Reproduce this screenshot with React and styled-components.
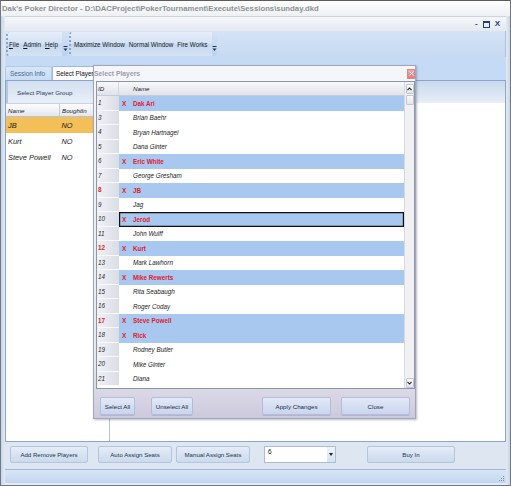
import React from 'react';
import styled, { createGlobalStyle } from 'styled-components';

const Global = createGlobalStyle`
  html, body { margin: 0; padding: 0; background: #fff; }
  body { font-family: "Liberation Sans", Arial, sans-serif; }
  #root { width: 511px; height: 486px; overflow: hidden; }
  * { box-sizing: border-box; }
`;

const UI = '"Liberation Sans", Arial, sans-serif';

const Window = styled.div`
  position: relative;
  width: 511px;
  height: 486px;
  display: flex;
  flex-direction: column;
  background: #d9e3ef;
  border: 1px solid #6f7886;
  border-top-color: #5c5c5c;
  overflow: hidden;
  font-family: ${UI};
`;

const TitleBar = styled.div`
  height: 15px;
  flex: none;
  padding-left: 1px;
  line-height: 15px;
  font-size: 7.75px;
  font-weight: bold;
  color: #8f9196;
  white-space: nowrap;
  background: linear-gradient(#fefefe, #eef0f3);
`;

const Frame = styled.div`
  flex: 1;
  display: flex;
  flex-direction: column;
  padding: 0 4px 2px 4px;
  background: linear-gradient(to right, #c9d6e6, #e3eaf3 4px, #e3eaf3 calc(100% - 4px), #c9d6e6);
`;

const MdiBar = styled.div`
  height: 15px;
  flex: none;
  display: flex;
  justify-content: flex-end;
  align-items: center;
  gap: 5px;
  padding-right: 6px;
  background: linear-gradient(#f4f6f9, #e4e9f0);
  border-top: 1px solid #cdd4de;
`;

const MdiGlyph = styled.span`
  font-size: 8px;
  font-weight: bold;
  color: #1b3f86;
  line-height: 8px;
`;

const MdiBox = styled.span`
  width: 7px;
  height: 7px;
  border: 1px solid #1b3f86;
  border-top-width: 2px;
`;

const ToolPanel = styled.div`
  height: 26px;
  flex: none;
  display: flex;
  gap: 1px;
  padding: 1px 0 1px 1px;
  background: linear-gradient(#d5e3f5, #c7daf2);
  border-right: 1px solid #a9bfdc;
`;

const ToolStrip = styled.div`
  width: ${p => p.$w}px;
  display: flex;
  align-items: center;
  padding-left: ${p => p.$pad}px;
  gap: 4px;
  border-radius: 3px;
  border-left: 2px dotted #8aa3c6;
  background: linear-gradient(#e6eefa, #d3e1f3 50%, #c5d7ef 51%, #d4e2f4);
`;

const MenuItem = styled.span`
  font-size: 6.3px;
  color: #101820;
  white-space: nowrap;
  u { text-decoration: underline; }
`;

const Overflow = styled.div`
  margin-left: auto;
  width: 6px;
  height: 100%;
  display: flex;
  align-items: flex-end;
  justify-content: center;
  padding-bottom: 4px;
  border-radius: 0 3px 3px 0;
  background: linear-gradient(#d4e2f4, #bcd1ed);
`;

const TabStrip = styled.div`
  height: 23px;
  flex: none;
  display: flex;
  align-items: flex-end;
  background: #c5daf5;
`;

const Tab = styled.div`
  height: 14px;
  width: ${p => p.$w}px;
  padding-left: ${p => (p.$active ? 3 : 4)}px;
  line-height: 14px;
  font-size: 6.4px;
  white-space: nowrap;
  overflow: hidden;
  color: ${p => (p.$active ? '#111' : '#4a6892')};
  background: ${p => (p.$active ? '#fbfcfe' : 'linear-gradient(#d7e6f8, #c9dcf5)')};
  border: 1px solid ${p => (p.$active ? '#9fb9db' : '#b3c9e6')};
  border-bottom: none;
  border-radius: 2px 2px 0 0;
`;

const Content = styled.div`
  flex: 1;
  display: flex;
  flex-direction: column;
  background: #fff;
  border: 1px solid #8aa6cb;
`;

const HeaderBand = styled.div`
  height: 22px;
  flex: none;
  display: flex;
  background: linear-gradient(#c9d9ec, #e7eef7);
`;

const GroupButton = styled.div`
  width: 92px;
  display: flex;
  align-items: center;
  padding-left: 9px;
  font-size: 6.2px;
  color: #1f3a60;
  white-space: nowrap;
  background: linear-gradient(#d3e0f0, #e8eff8);
  border-left: 2px solid #b5c8e1;
`;

const ContentBody = styled.div`
  flex: 1;
  display: flex;
`;

const LeftGrid = styled.div`
  width: 104px;
  display: flex;
  flex-direction: column;
  border-right: 1px solid #b7c3d3;
`;

const LeftHead = styled.div`
  height: 14px;
  display: flex;
  background: linear-gradient(#fdfdfe, #e3e8ef);
  border-bottom: 1px solid #b9c3d1;
  border-top: 1px solid #c9d2de;
`;

const LeftRow = styled.div`
  height: 16px;
  display: flex;
  background: ${p => (p.$hl ? '#f3bf59' : '#fff')};
`;

const LeftCell = styled.div`
  width: ${p => p.$w}px;
  display: flex;
  align-items: center;
  padding-left: 2px;
  font-size: ${p => (p.$head ? 6.2 : 7.4)}px;
  font-style: italic;
  color: #1a1a1a;
  white-space: nowrap;
  border-left: ${p => (p.$sep ? '1px solid #c6ccd6' : 'none')};
`;

const BottomBar = styled.div`
  height: 27px;
  flex: none;
  display: flex;
  align-items: flex-start;
  padding: 4px 0 0 5px;
  background: #dde6f1;
`;

const BarButton = styled.div`
  width: ${p => p.$w}px;
  margin-left: ${p => p.$ml || 0}px;
  height: 17px;
  display: flex;
  align-items: center;
  justify-content: center;
  font-size: 6.1px;
  color: #23344f;
  white-space: nowrap;
  border: 1px solid #b3c6de;
  border-radius: 2px;
  background: linear-gradient(#e4ecf7, #cbdaee);
`;

const Combo = styled.div`
  width: ${p => p.$w}px;
  margin-left: ${p => p.$ml}px;
  height: 17px;
  display: flex;
  background: #fff;
  border: 1px solid #abbdd4;
`;

const ComboText = styled.div`
  flex: 1;
  padding: 1px 0 0 3px;
  font-size: 6.5px;
  color: #111;
`;

const ComboArrow = styled.div`
  width: 8px;
  display: flex;
  align-items: center;
  justify-content: center;
  background: linear-gradient(#eef3fa, #d6e2f1);
`;

const StatusBar = styled.div`
  height: 14px;
  flex: none;
  display: flex;
  justify-content: flex-end;
  align-items: flex-end;
  padding: 0 1px 1px 0;
  background: linear-gradient(#d8e5f6, #c3d6ef);
  border-top: 1px solid #9fb8da;
`;

/* ---------- dialog ---------- */

const Dialog = styled.div`
  position: absolute;
  left: 92px;
  top: 64px;
  width: 323px;
  height: 354px;
  display: flex;
  flex-direction: column;
  border: 1px solid #a2a6b8;
  background: linear-gradient(#f5f6f9, #e6e7ee 85%, #cdc9de);
  box-shadow: 1px 1px 2px rgba(60, 60, 90, 0.35);
`;

const DialogTitle = styled.div`
  height: 15px;
  flex: none;
  display: flex;
  align-items: center;
  justify-content: space-between;
  font-size: 6.8px;
  font-weight: bold;
  color: #9c9daa;
`;

const CloseBtn = styled.div`
  width: 8px;
  height: 10px;
  display: flex;
  align-items: center;
  justify-content: center;
  background: linear-gradient(#f3a5a5, #e27b7b);
  border: 1px solid #d88;
`;

const GridBox = styled.div`
  margin-left: 2px;
  width: 319px;
  height: 308px;
  flex: none;
  display: flex;
  background: #fff;
  border: 1px solid #8e96a6;
`;

const Table = styled.div`
  flex: 1;
  display: flex;
  flex-direction: column;
`;

const HeadRow = styled.div`
  height: 14px;
  flex: none;
  display: flex;
  background: linear-gradient(#f7f8fa, #dfe3ea);
  border-bottom: 1px solid #c7ccd6;
`;

const HeadCell = styled.div`
  width: ${p => (p.$w ? `${p.$w}px` : 'auto')};
  flex: ${p => (p.$w ? 'none' : 1)};
  display: flex;
  align-items: center;
  padding-left: ${p => p.$pl}px;
  font-size: 6.2px;
  font-style: italic;
  color: #1a1a1a;
  border-right: ${p => (p.$sep ? '1px solid #d3d7de' : 'none')};
`;

const Row = styled.div`
  height: 14.5px;
  flex: none;
  display: flex;
`;

const IdCell = styled.div`
  width: 22px;
  flex: none;
  display: flex;
  align-items: center;
  padding-left: 1px;
  font-size: 6.3px;
  font-style: ${p => (p.$red ? 'normal' : 'italic')};
  font-weight: ${p => (p.$red ? 'bold' : 'normal')};
  color: ${p => (p.$red ? '#e0202c' : '#2a2a2a')};
  background: linear-gradient(to right, #f0f1f5, #d9dde5);
  border-bottom: 1px solid #f8f9fb;
`;

const RowBody = styled.div`
  flex: 1;
  display: flex;
  align-items: center;
  background: ${p => (p.$sel ? '#a9c8ef' : '#fff')};
  box-shadow: ${p => (p.$focus ? 'inset 0 0 0 1.2px #111' : 'none')};
`;

const Mark = styled.div`
  width: 12px;
  flex: none;
  padding-left: 3px;
  font-size: 6.4px;
  font-weight: bold;
  color: #e0202c;
`;

const Name = styled.div`
  padding-left: 2px;
  font-size: 6.3px;
  white-space: nowrap;
  font-style: ${p => (p.$sel ? 'normal' : 'italic')};
  font-weight: ${p => (p.$sel ? 'bold' : 'normal')};
  color: ${p => (p.$sel ? '#e0202c' : '#222')};
`;

const ScrollBar = styled.div`
  width: 10px;
  flex: none;
  display: flex;
  flex-direction: column;
  align-items: center;
  padding-top: 2px;
  background: #f1f1f4;
  border-left: 1px solid #d6d8de;
`;

const ScrollBtn = styled.div`
  width: 8px;
  height: ${p => p.$h}px;
  margin-top: ${p => p.$mt || 0}px;
  display: flex;
  align-items: center;
  justify-content: center;
  border: 1px solid #c2c6d0;
  border-radius: 1px;
  background: linear-gradient(#fbfbfc, #e2e4ea);
`;

const ScrollSpace = styled.div`
  flex: 1;
`;

const DialogButtons = styled.div`
  flex: 1;
  display: flex;
  align-items: flex-start;
  padding: 8px 0 0 6px;
`;

const DlgButton = styled.div`
  width: ${p => p.$w}px;
  margin-left: ${p => p.$ml || 0}px;
  height: 18px;
  display: flex;
  align-items: center;
  justify-content: center;
  font-size: 6.2px;
  color: #1d2a45;
  white-space: nowrap;
  border: 1px solid #b5bdd6;
  border-radius: 2px;
  background: linear-gradient(#e2e9f7, #c9d5ef);
  box-shadow: 0 1px 0 rgba(120, 110, 160, 0.25);
`;

const players = [
  { id: 1, name: 'Dak Ari', x: true },
  { id: 3, name: 'Brian Baehr' },
  { id: 4, name: 'Bryan Hartnagel' },
  { id: 5, name: 'Dana Ginter' },
  { id: 6, name: 'Eric White', x: true },
  { id: 7, name: 'George Gresham' },
  { id: 8, name: 'JB', x: true, group: true },
  { id: 9, name: 'Jag' },
  { id: 10, name: 'Jerod', x: true, focus: true },
  { id: 11, name: 'John Wulff' },
  { id: 12, name: 'Kurt', x: true, group: true },
  { id: 13, name: 'Mark Lawhorn' },
  { id: 14, name: 'Mike Rewerts', x: true },
  { id: 15, name: 'Rita Seabaugh' },
  { id: 16, name: 'Roger Coday' },
  { id: 17, name: 'Steve Powell', x: true, group: true },
  { id: 18, name: 'Rick', x: true },
  { id: 19, name: 'Rodney Butler' },
  { id: 20, name: 'Mike Ginter' },
  { id: 21, name: 'Diana' },
];

const group = [
  { name: 'JB', bought: 'NO', hl: true },
  { name: 'Kurt', bought: 'NO' },
  { name: 'Steve Powell', bought: 'NO' },
];

const OverflowIcon = () => (
  <svg width="5" height="6" viewBox="0 0 5 6">
    <rect x="0.5" y="0" width="4" height="1" fill="#243a5e" />
    <path d="M0.5 2.5 L4.5 2.5 L2.5 5 Z" fill="#243a5e" />
  </svg>
);

const Chevron = ({ up }) => (
  <svg width="5" height="4" viewBox="0 0 5 4">
    <path d={up ? 'M0.5 3.2 L2.5 1 L4.5 3.2' : 'M0.5 0.8 L2.5 3 L4.5 0.8'} stroke="#222" strokeWidth="1.1" fill="none" />
  </svg>
);

const Grip = () => (
  <svg width="8" height="8" viewBox="0 0 8 8">
    {[[6, 2], [6, 4], [4, 4], [6, 6], [4, 6], [2, 6]].map(([x, y]) => (
      <rect key={`${x}-${y}`} x={x} y={y} width="1" height="1" fill="#7d93b3" />
    ))}
  </svg>
);

export default function App() {
  return (
    <>
      <Global />
      <Window>
        <TitleBar>Dak's Poker Director - D:\DACProject\PokerTournament\Execute\Sessions\sunday.dkd</TitleBar>
        <Frame>
          <MdiBar>
            <MdiGlyph>-</MdiGlyph>
            <MdiBox />
            <MdiGlyph>X</MdiGlyph>
          </MdiBar>
          <ToolPanel>
            <ToolStrip $w={62} $pad={1}>
              <MenuItem><u>F</u>ile</MenuItem>
              <MenuItem><u>A</u>dmin</MenuItem>
              <MenuItem><u>H</u>elp</MenuItem>
              <Overflow><OverflowIcon /></Overflow>
            </ToolStrip>
            <ToolStrip $w={147} $pad={3}>
              <MenuItem>Maximize Window</MenuItem>
              <MenuItem>Normal Window</MenuItem>
              <MenuItem>Fire Works</MenuItem>
              <Overflow><OverflowIcon /></Overflow>
            </ToolStrip>
          </ToolPanel>
          <TabStrip>
            <Tab $w={47}>Session Info</Tab>
            <Tab $w={60} $active>Select Players</Tab>
          </TabStrip>
          <Content>
            <HeaderBand>
              <GroupButton>Select Player Group</GroupButton>
            </HeaderBand>
            <ContentBody>
              <LeftGrid>
                <LeftHead>
                  <LeftCell $w={53} $head>Name</LeftCell>
                  <LeftCell $w={50} $head $sep>BoughtIn</LeftCell>
                </LeftHead>
                {group.map(g => (
                  <LeftRow key={g.name} $hl={g.hl}>
                    <LeftCell $w={54}>{g.name}</LeftCell>
                    <LeftCell $w={50}>{g.bought}</LeftCell>
                  </LeftRow>
                ))}
              </LeftGrid>
            </ContentBody>
          </Content>
          <BottomBar>
            <BarButton $w={78}>Add Remove Players</BarButton>
            <BarButton $w={74} $ml={10}>Auto Assign Seats</BarButton>
            <BarButton $w={74} $ml={4}>Manual Assign Seats</BarButton>
            <Combo $w={72} $ml={14}>
              <ComboText>6</ComboText>
              <ComboArrow>
                <svg width="4" height="3" viewBox="0 0 4 3"><path d="M0 0 L4 0 L2 3 Z" fill="#222" /></svg>
              </ComboArrow>
            </Combo>
            <BarButton $w={88} $ml={31}>Buy In</BarButton>
          </BottomBar>
          <StatusBar>
            <Grip />
          </StatusBar>
        </Frame>

        <Dialog>
          <DialogTitle>
            <span>Select Players</span>
            <CloseBtn>
              <svg width="5" height="5" viewBox="0 0 5 5">
                <path d="M0.5 0.5 L4.5 4.5 M4.5 0.5 L0.5 4.5" stroke="#fff" strokeWidth="1" />
              </svg>
            </CloseBtn>
          </DialogTitle>
          <GridBox>
            <Table>
              <HeadRow>
                <HeadCell $w={22} $pl={1} $sep>ID</HeadCell>
                <HeadCell $w={12} $pl={0} />
                <HeadCell $pl={2}>Name</HeadCell>
              </HeadRow>
              {players.map(p => (
                <Row key={p.id}>
                  <IdCell $red={p.group}>{p.id}</IdCell>
                  <RowBody $sel={p.x} $focus={p.focus}>
                    <Mark>{p.x ? 'X' : ''}</Mark>
                    <Name $sel={p.x}>{p.name}</Name>
                  </RowBody>
                </Row>
              ))}
            </Table>
            <ScrollBar>
              <ScrollBtn $h={10}><Chevron up /></ScrollBtn>
              <ScrollBtn $h={10} $mt={1} />
              <ScrollSpace />
              <ScrollBtn $h={10}><Chevron /></ScrollBtn>
            </ScrollBar>
          </GridBox>
          <DialogButtons>
            <DlgButton $w={35}>Select All</DlgButton>
            <DlgButton $w={42} $ml={16}>Unselect All</DlgButton>
            <DlgButton $w={69} $ml={69}>Apply Changes</DlgButton>
            <DlgButton $w={69} $ml={10}>Close</DlgButton>
          </DialogButtons>
        </Dialog>
      </Window>
    </>
  );
}
